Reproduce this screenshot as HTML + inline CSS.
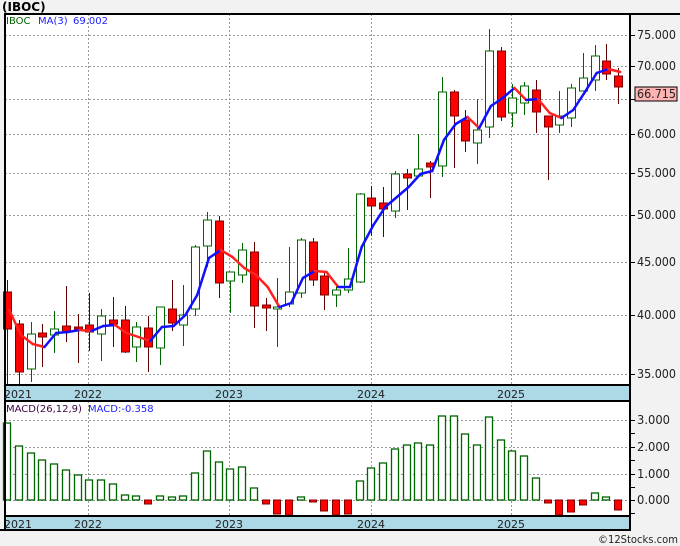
<!DOCTYPE html>
<html><head><meta charset="utf-8"><style>
html,body{margin:0;padding:0;background:#f2f2f2;width:680px;height:546px;overflow:hidden}
svg{display:block}
text{font-family:"DejaVu Sans","Liberation Sans",sans-serif}
</style></head><body>
<svg id="s" width="680" height="546" xmlns="http://www.w3.org/2000/svg">
<rect x="0" y="0" width="680" height="546" fill="#f2f2f2"/>
<text x="2" y="11" font-size="12" font-weight="bold" fill="#000">(IBOC)</text>
<rect x="5" y="14" width="625" height="371" fill="#fff"/>
<rect x="5" y="401" width="625" height="115" fill="#fff"/>
<rect x="5" y="385" width="625" height="16" fill="#add8e6"/>
<rect x="5" y="516" width="625" height="14" fill="#add8e6"/>
<g id="grid" stroke="#999" stroke-width="1" stroke-dasharray="2,2" fill="none"></g>
<g id="plot"></g>
<g stroke="#000" stroke-width="2" fill="none">
<line x1="4" y1="14" x2="680" y2="14"/>
<line x1="5" y1="14" x2="5" y2="531"/>
<line x1="630" y1="14" x2="630" y2="531"/>
<line x1="5" y1="385" x2="630" y2="385"/>
<line x1="5" y1="401" x2="630" y2="401"/>
<line x1="5" y1="516" x2="630" y2="516"/>
<line x1="0" y1="530" x2="630" y2="530"/>
</g>
<g font-size="11" fill="#222">
<text x="4" y="398">2021</text><text x="74" y="398">2022</text><text x="215" y="398">2023</text><text x="357" y="398">2024</text><text x="497" y="398">2025</text>
<text x="4" y="528">2021</text><text x="74" y="528">2022</text><text x="215" y="528">2023</text><text x="357" y="528">2024</text><text x="497" y="528">2025</text>
</g>
<text x="6" y="24" font-size="10" fill="#006400">IBOC</text>
<text x="38" y="24" font-size="10" fill="#2020ff">MA(3)</text>
<text x="73" y="24" font-size="10" fill="#2020ff">69.002</text>
<text x="6" y="412" font-size="10" fill="#400040">MACD(26,12,9)</text>
<text x="88" y="412" font-size="10" fill="#2020ff">MACD:-0.358</text>
<g font-size="12" fill="#222">
<text x="637" y="39" textLength="39" lengthAdjust="spacingAndGlyphs">75.000</text><text x="637" y="70" textLength="39" lengthAdjust="spacingAndGlyphs">70.000</text><text x="637" y="138" textLength="39" lengthAdjust="spacingAndGlyphs">60.000</text><text x="637" y="177" textLength="39" lengthAdjust="spacingAndGlyphs">55.000</text><text x="637" y="219" textLength="39" lengthAdjust="spacingAndGlyphs">50.000</text><text x="637" y="266" textLength="39" lengthAdjust="spacingAndGlyphs">45.000</text><text x="637" y="319" textLength="39" lengthAdjust="spacingAndGlyphs">40.000</text><text x="637" y="378" textLength="39" lengthAdjust="spacingAndGlyphs">35.000</text>
<text x="637" y="424" textLength="33" lengthAdjust="spacingAndGlyphs">3.000</text><text x="637" y="451" textLength="33" lengthAdjust="spacingAndGlyphs">2.000</text><text x="637" y="478" textLength="33" lengthAdjust="spacingAndGlyphs">1.000</text><text x="637" y="504" textLength="33" lengthAdjust="spacingAndGlyphs">0.000</text>
</g>
<rect x="635" y="87" width="42" height="14" fill="#ffb3b3" stroke="#000" stroke-width="1"/>
<text x="637" y="98" font-size="12" fill="#222" textLength="39" lengthAdjust="spacingAndGlyphs">66.715</text>
<text x="678" y="543" font-size="11" fill="#222" text-anchor="end" textLength="80" lengthAdjust="spacingAndGlyphs">©12Stocks.com</text>
</svg>
<script>
var NS="http://www.w3.org/2000/svg",P=document.getElementById('plot'),G=document.getElementById('grid');
function el(p,t,a){var e=document.createElementNS(NS,t);for(var k in a)e.setAttribute(k,a[k]);p.appendChild(e);return e;}
[35,66,99,134,173,215,262,315,374,420,447,474,500].forEach(function(y){el(G,'line',{x1:5,y1:y+.5,x2:630,y2:y+.5});});
[88,229,371,511].forEach(function(x){el(G,'line',{x1:x+.5,y1:14,x2:x+.5,y2:385});el(G,'line',{x1:x+.5,y1:401,x2:x+.5,y2:516});});
var T=document.getElementById('s');
[35,66,99,134,173,215,262,315,374,420,433,447,460,474,487,500,513].forEach(function(y){el(T,'line',{x1:630,y1:y+.5,x2:635,y2:y+.5,stroke:'#000'});});
var C=[["r",292,329,280,385],["r",324,372,320,384],["g",334,369,322,382],["r",333,337,324,367],["g",329,335,311,353],["r",326,332,286,342],["r",327,329,314,363],["r",325,332,293,351],["g",316,334,309,361],["r",320,324,297,347],["r",320,352,306,353],["g",327,347,322,362],["r",328,347,316,372],["g",307,348,307,365],["r",309,323,280,331],["g",315,325,285,346],["g",247,309,245,316],["g",220,246,212,267],["r",221,283,216,298],["g",272,281,272,313],["g",250,275,243,283],["r",252,306,242,328],["r",305,308,298,331],["g",307,309,278,347],["g",292,304,247,307],["g",240,293,238,298],["r",242,280,238,286],["r",276,295,272,310],["g",290,295,283,307],["g",279,290,248,293],["g",194,282,193,283],["r",198,206,186,236],["r",203,209,187,237],["g",174,211,171,218],["r",174,178,169,210],["g",169,176,134,176],["r",163,167,161,198],["g",92,166,77,177],["r",92,116,90,168],["r",120,141,110,152],["g",130,143,99,164],["g",51,127,29,138],["r",51,117,47,121],["g",98,113,84,127],["g",86,103,82,115],["r",90,112,80,133],["r",116,127,116,180],["g",116,125,91,133],["g",88,118,84,127],["g",78,91,53,91],["g",56,80,45,91],["r",61,74,44,80],["r",76,87,68,104]];
function cx(i){return 7.2+11.75*i;}
C.forEach(function(c,i){var x=Math.round(cx(i))+.5,g=c[0]=="g";
el(P,'line',{x1:x,y1:c[3],x2:x,y2:c[4],stroke:g?'#006400':'#600000','stroke-width':1});
el(P,'rect',{x:x-4,y:c[1],width:8,height:Math.max(c[2]-c[1],2),fill:g?'#fff':'#ff0000',stroke:g?'#006400':'#800000','stroke-width':1});});
var M=[310,335,344,347,333,332,330,331,326,325,333,337,341,327,326,315,295,258,250,257,268,275,287,307,303,278,271,272,287,287,247,225,207,197,187,174,171,140,124,117,128,106,98,88,100,99,113,118,110,92,73,69,72];
for(var i=0;i<M.length-1;i++){el(P,'line',{x1:cx(i)+2,y1:M[i],x2:cx(i+1)+2,y2:M[i+1],stroke:M[i+1]>M[i]?'#ff2020':'#1010ff','stroke-width':2.5,'stroke-linecap':'round'});}
var B=[423,446,453,460,464,470,475,480,480,484,495,496,-504,496,497,496,473,451,462,469,467,488,-504,-514,-515,497,-502,-511,-515,-514,481,468,463,449,445,443,445,416,416,434,445,417,440,451,456,478,-503,-515,-512,-505,493,497,-510];
B.forEach(function(v,i){var x=Math.round(3+11.75*i)+.5;if(v>0){el(P,'rect',{x:x,y:v,width:7,height:500-v,fill:'#fff',stroke:'#006400','stroke-width':1.3});}else{el(P,'rect',{x:x,y:500,width:7,height:-v-500,fill:'#ff0000',stroke:'#800000','stroke-width':1});}});
</script>
</body></html>
